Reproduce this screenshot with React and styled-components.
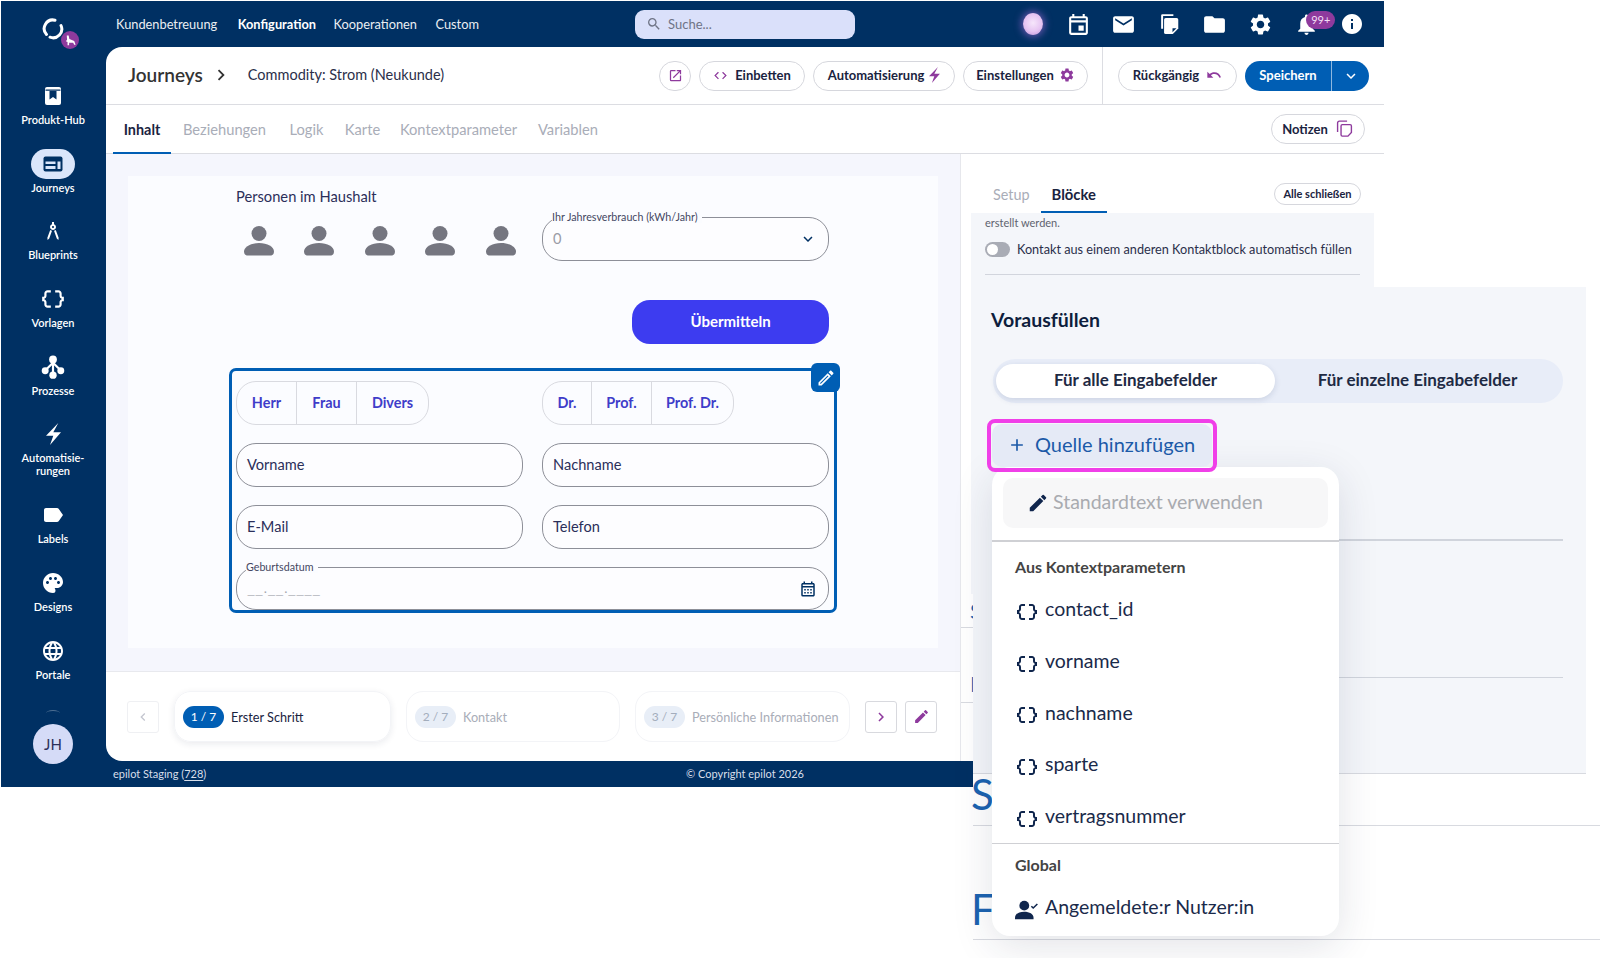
import React from 'react';
import styled, { createGlobalStyle } from 'styled-components';
import {
  MdArchitecture, MdDataObject, MdLabel, MdPalette, MdLanguage, MdOutlineEvent, MdEmail,
  MdFolder, MdSettings, MdNotifications, MdInfo, MdSearch, MdOutlineOpenInNew, MdCode,
  MdUndo, MdKeyboardArrowDown, MdKeyboardArrowRight, MdKeyboardArrowLeft, MdEdit,
  MdOutlineEdit, MdOutlineCalendarMonth, MdAdd,
} from 'react-icons/md';

const NAVY = '#003063';
const BLUE = '#005eb4';
const PURPLE = '#8e3a9d';
const INK = '#1a2340';
const FONT = `Lato, "Liberation Sans", sans-serif`;

const GlobalStyle = createGlobalStyle`
  html, body { margin: 0; padding: 0; background: #fff; }
  * { box-sizing: border-box; }
  body { font-family: ${FONT}; color: ${INK}; }
`;

const Page = styled.div`
  position: relative;
  width: 1600px;
  height: 958px;
  padding: 1px 0 0 1px;
  overflow: hidden;
  background: #fff;
`;

const AppWindow = styled.div`
  display: flex;
  width: 1383px;
  height: 786px;
  background: ${NAVY};
`;

/* sidebar */
const Sidebar = styled.aside`
  display: flex;
  flex-direction: column;
  align-items: center;
  flex: 0 0 105px;
  padding: 0 1px 23px 0;
`;

const LogoBox = styled.div`
  position: relative;
  width: 24px;
  height: 24px;
  margin: 16px 0 40px;
  color: #fff;
`;

const LogoBadge = styled.div`
  position: absolute;
  left: 20px;
  top: 14px;
  display: flex;
  align-items: center;
  justify-content: center;
  width: 18px;
  height: 18px;
  border-radius: 50%;
  background: ${PURPLE};
`;

const SideNav = styled.nav`
  display: flex;
  flex-direction: column;
  align-items: center;
  gap: 22.7px;
`;

const SideItem = styled.div`
  display: flex;
  flex-direction: column;
  align-items: center;
  gap: 2px;
  width: 100%;
  color: #fff;
  font-size: 11px;
  font-weight: 600;
  line-height: 13px;
  text-align: center;
`;

const SideIcon = styled.div`
  display: flex;
  align-items: center;
  justify-content: center;
  width: 44px;
  height: 30px;
  border-radius: 15px;
  background: ${(p) => (p.$active ? '#dbe6fb' : 'transparent')};
  color: ${(p) => (p.$active ? NAVY : '#fff')};
`;

const HiddenArc = styled.div`
  width: 14px;
  height: 6px;
  margin-top: auto;
  margin-bottom: 8px;
  border-top: 1px solid rgba(255, 255, 255, 0.3);
  border-radius: 50%;
`;

const Avatar = styled.div`
  display: flex;
  align-items: center;
  justify-content: center;
  width: 40px;
  height: 40px;
  border-radius: 50%;
  background: #d5dbf7;
  color: #2b2f5a;
  font-size: 15px;
`;

/* main column */
const MainColumn = styled.div`
  display: flex;
  flex-direction: column;
  flex: 1;
  min-width: 0;
`;

const TopBar = styled.header`
  display: flex;
  align-items: center;
  flex: 0 0 46px;
  padding: 0 9.5px 0 10px;
`;

const TopNav = styled.div`
  display: flex;
  align-items: center;
  gap: 18.5px;
  width: 519px;
`;

const TopLink = styled.a`
  margin: ${(p) => (p.$active ? '0 -1px 0 2px' : 0)};
  color: #fff;
  font-size: 12.8px;
  font-weight: ${(p) => (p.$active ? 700 : 400)};
  opacity: ${(p) => (p.$active ? 1 : 0.92)};
`;

const SearchBox = styled.div`
  display: flex;
  align-items: center;
  gap: 6px;
  width: 220px;
  height: 29px;
  padding-left: 11px;
  border-radius: 9px;
  background: #dae0fa;
  color: #6f7486;
  font-size: 13px;
`;

const TopIcons = styled.div`
  display: flex;
  align-items: center;
  margin-left: auto;
`;

const TopIcon = styled.div`
  position: relative;
  display: flex;
  align-items: center;
  justify-content: center;
  width: 45.6px;
  height: 46px;
  color: #fff;
`;

const Orb = styled.div`
  width: 20px;
  height: 22px;
  border-radius: 50%;
  background: radial-gradient(circle at 50% 45%, #f6e6fb 0%, #e6c4f2 55%, #b68ad6 100%);
  box-shadow: 0 0 7px 2px rgba(170, 110, 220, 0.55);
`;

const NotifyBadge = styled.span`
  position: absolute;
  left: 23px;
  top: 10px;
  width: 29px;
  height: 18px;
  border-radius: 9px;
  background: ${PURPLE};
  color: #f3dff6;
  font-size: 11px;
  line-height: 18px;
  text-align: center;
`;

const Card = styled.main`
  display: flex;
  flex-direction: column;
  flex: 1;
  min-height: 0;
  overflow: hidden;
  border-radius: 16px 0 0 16px;
  background: #fff;
`;

const HeaderRow = styled.div`
  display: flex;
  align-items: stretch;
  flex: 0 0 58px;
  padding-left: 22px;
  border-bottom: 1px solid #dcdde2;
`;

const Crumbs = styled.div`
  display: flex;
  align-items: center;
  padding-bottom: 2px;
`;

const CrumbTitle = styled.h1`
  margin: 0;
  color: #333;
  font-size: 19px;
  font-weight: 600;
`;

const CrumbChevron = styled.span`
  display: flex;
  margin: 0 16px 0 7px;
  color: #333;
`;

const CrumbText = styled.span`
  color: #2b2f4a;
  font-size: 14.5px;
`;

const ActionGroup = styled.div`
  display: flex;
  align-items: center;
  gap: 8px;
  margin-left: ${(p) => (p.$push ? 'auto' : 0)};
  padding: ${(p) => p.$pad};
  border-left: ${(p) => (p.$line ? '1px solid #dcdde2' : 'none')};
`;

const PillButton = styled.button`
  display: flex;
  align-items: center;
  justify-content: center;
  gap: ${(p) => p.$gap || 7}px;
  width: ${(p) => p.$w}px;
  height: 30px;
  padding: 0 0 1px;
  border: 1px solid #d6d7dd;
  border-radius: 15px;
  background: #fff;
  color: ${INK};
  font-family: ${FONT};
  font-size: 13px;
  font-weight: 700;
  svg { color: ${PURPLE}; flex: none; }
`;

const SaveSplit = styled.div`
  display: flex;
  height: 30px;
  overflow: hidden;
  border-radius: 15px;
  background: ${BLUE};
  color: #fff;
`;

const SaveLabel = styled.span`
  width: 87px;
  border-right: 1px solid #8fb8df;
  font-size: 13px;
  font-weight: 700;
  line-height: 29px;
  text-align: center;
`;

const SaveCaret = styled.span`
  display: flex;
  align-items: center;
  justify-content: center;
  width: 37px;
`;

const TabsRow = styled.div`
  display: flex;
  align-items: stretch;
  flex: 0 0 49px;
  padding: 0 19px 0 7px;
  border-bottom: 1px solid #dcdde2;
`;

const Tab = styled.a`
  display: flex;
  align-items: center;
  justify-content: center;
  width: ${(p) => p.$w}px;
  padding-top: 1px;
  border-bottom: 2px solid ${(p) => (p.$active ? BLUE : 'transparent')};
  margin-bottom: -1px;
  color: ${(p) => (p.$active ? INK : '#a9adb8')};
  font-size: ${(p) => (p.$active ? 14.4 : 14.7)}px;
  font-weight: ${(p) => (p.$active ? 700 : 400)};
`;

const NotesWrap = styled.div`
  display: flex;
  align-items: center;
  margin-left: auto;
`;

const Workspace = styled.div`
  display: flex;
  flex: 1;
  min-height: 0;
`;

const LeftColumn = styled.section`
  display: flex;
  flex-direction: column;
  flex: 0 0 854px;
`;

const Stage = styled.div`
  flex: 1;
  padding: 22px 22px 23px;
  background: #f5f6fd;
`;

const Canvas = styled.div`
  height: 100%;
  padding: 11px 109px 0 108px;
  background: #fbfcff;
`;

const FieldLabel = styled.div`
  color: #2b2f5a;
  font-size: 14.7px;
  line-height: 18px;
`;

const TwoCols = styled.div`
  display: grid;
  grid-template-columns: 287px 287px;
  column-gap: 19px;
  margin-top: ${(p) => p.$top || 0}px;
`;

const Persons = styled.div`
  display: flex;
  gap: 30.4px;
  padding: 9px 0 0 8px;
`;

const OutlineField = styled.div`
  position: relative;
  display: flex;
  align-items: center;
  justify-content: space-between;
  height: 44px;
  padding: 0 11px 2px 10px;
  border: 1.5px solid #8d8f98;
  border-radius: 20px;
  background: #fdfdff;
  color: ${(p) => (p.$muted ? '#9a9ca6' : '#2b2f5a')};
  font-size: 14.6px;
  svg { margin-top: 2px; }
`;

const Legend = styled.span`
  position: absolute;
  left: 9px;
  top: -8px;
  padding-right: 4px;
  background: #fbfcff;
  color: #44475f;
  font-size: 10.7px;
  line-height: 13px;
`;

const DatePlaceholder = styled.span`
  padding-bottom: 4px;
  color: #a4a6ae;
  font-size: 18px;
  font-weight: 300;
  line-height: 20px;
`;

const SubmitRow = styled.div`
  display: flex;
  justify-content: flex-end;
  margin-top: 39px;
`;

const SubmitButton = styled.button`
  width: 197px;
  height: 44px;
  padding: 0 0 2px;
  border: 0;
  border-radius: 18px;
  background: #3d3cf0;
  color: #fff;
  font-family: ${FONT};
  font-size: 15px;
  font-weight: 700;
`;

const BlockFrame = styled.div`
  position: relative;
  display: flex;
  flex-direction: column;
  gap: 18px;
  height: 245px;
  margin: 24px -8px 0 -7px;
  padding: 10px 5px 0 4px;
  border: 3px solid ${BLUE};
  border-radius: 7px;
`;

const FrameEdit = styled.div`
  position: absolute;
  right: -6px;
  top: -8px;
  display: flex;
  align-items: center;
  justify-content: center;
  width: 29px;
  height: 29px;
  border-radius: 6px;
  background: ${BLUE};
  color: #fff;
`;

const ChoiceGroup = styled.div`
  display: inline-flex;
  height: 44px;
  overflow: hidden;
  border: 1px solid #d9dae0;
  border-radius: 20px;
  justify-self: start;
`;

const Choice = styled.span`
  display: flex;
  align-items: center;
  justify-content: center;
  width: ${(p) => p.$w}px;
  padding-bottom: 2px;
  border-left: ${(p) => (p.$first ? 'none' : '1px solid #d9dae0')};
  color: #3f3cc9;
  font-size: 14.4px;
  font-weight: 700;
`;

const Stepper = styled.div`
  display: flex;
  align-items: center;
  gap: 15px;
  flex: 0 0 90px;
  padding-left: 21px;
  border-top: 1px solid #e8e9ee;
`;

const SquareButton = styled.button`
  display: flex;
  align-items: center;
  justify-content: center;
  width: 32px;
  height: 32px;
  margin-left: ${(p) => p.$shift || 0}px;
  padding: 0;
  border: 1px solid ${(p) => (p.$off ? '#eff0f3' : '#d8d9de')};
  border-radius: 3px;
  background: #fff;
  color: ${(p) => (p.$off ? '#c4c6cf' : PURPLE)};
`;

const StepCard = styled.div`
  display: flex;
  align-items: center;
  gap: 7px;
  width: ${(p) => p.$w}px;
  height: 51px;
  padding-left: 8px;
  border: 1px solid #f3f4f7;
  border-radius: 17px;
  box-shadow: ${(p) => (p.$active ? '0 2px 7px rgba(20, 30, 70, 0.09)' : 'none')};
  color: ${(p) => (p.$active ? INK : '#a9adb8')};
  font-size: 12.7px;
`;

const StepPill = styled.span`
  width: 41px;
  height: 22px;
  border-radius: 11px;
  background: ${(p) => (p.$active ? BLUE : '#e8eef7')};
  color: ${(p) => (p.$active ? '#fff' : '#a3adbc')};
  font-size: 12px;
  line-height: 22px;
  text-align: center;
`;

const RightColumn = styled.section`
  display: flex;
  flex-direction: column;
  flex: 1;
  border-left: 1px solid #e6e7ec;
`;

const SideTabs = styled.div`
  display: flex;
  align-items: flex-end;
  flex: 0 0 59px;
  padding: 0 23px 0 21px;
`;

const SideTab = styled.a`
  padding: 0 11px 8px;
  border-bottom: 2px solid ${(p) => (p.$active ? BLUE : 'transparent')};
  color: ${(p) => (p.$active ? INK : '#a9adb8')};
  font-size: ${(p) => (p.$active ? 14.8 : 14.4)}px;
  font-weight: ${(p) => (p.$active ? 700 : 400)};
`;

const CloseAll = styled.button`
  width: 87px;
  height: 22px;
  margin: 0 0 8px auto;
  padding: 0 0 1px;
  border: 1px solid #d6d7dd;
  border-radius: 11px;
  background: #fff;
  color: ${INK};
  font-family: ${FONT};
  font-size: 11px;
  font-weight: 700;
`;

const BlockPanel = styled.div`
  flex: 0 0 381px;
  margin: 0 10px;
  padding: 2px 14px 0;
  background: #f4f6fa;
`;

const SmallNote = styled.div`
  color: #5f636f;
  font-size: 11px;
  line-height: 16px;
`;

const ToggleRow = styled.div`
  display: flex;
  align-items: center;
  gap: 7px;
  margin-top: 10px;
  padding-bottom: 17px;
  border-bottom: 1px solid #d2d5dd;
  color: #2b2f4a;
  font-size: 12.7px;
  line-height: 16px;
  white-space: nowrap;
`;

const ToggleTrack = styled.span`
  display: flex;
  align-items: center;
  width: 25px;
  height: 15px;
  padding-left: 2px;
  border-radius: 8px;
  background: #a9acb5;
`;

const ToggleKnob = styled.span`
  width: 11px;
  height: 11px;
  border-radius: 50%;
  background: #fff;
`;

const ClippedRow = styled.div`
  display: flex;
  align-items: flex-end;
  height: ${(p) => p.$h}px;
  padding: 0 0 ${(p) => p.$bottom}px 9px;
  border-bottom: 1px solid #d8dae0;
  color: #1c63b0;
  font-size: 22px;
  line-height: 20px;
`;

const FooterBar = styled.footer`
  display: flex;
  align-items: center;
  flex: 0 0 26px;
  padding: 0 0 2px 7px;
  color: #d8dfea;
  font-size: 11px;
`;

const FooterLeft = styled.span`
  width: 573px;
  u { text-underline-offset: 2px; }
`;

/* zoomed panel lying over the window */
const ZoomOverlay = styled.div`
  position: absolute;
  left: 973px;
  top: 287px;
  width: 627px;
  height: 671px;
  background: #fff;
`;

const GreySection = styled.div`
  width: 613px;
  height: 487px;
  padding-top: 21px;
  border-bottom: 1.5px solid #d8dae0;
  background: #f4f6fa;
`;

const SectionTitle = styled.h2`
  margin: 0 0 0 18px;
  color: #0e1e3d;
  font-size: 19.5px;
  font-weight: 700;
  line-height: 24px;
`;

const Segmented = styled.div`
  display: flex;
  align-items: center;
  width: 570px;
  height: 44px;
  margin: 27px 0 0 20px;
  padding: 0 3px;
  border-radius: 22px;
  background: #e8edf8;
`;

const Segment = styled.span`
  flex: ${(p) => (p.$active ? '0 0 279px' : 1)};
  height: 34px;
  border-radius: 17px;
  background: ${(p) => (p.$active ? '#fff' : 'transparent')};
  box-shadow: ${(p) => (p.$active ? '0 2px 6px rgba(30, 50, 100, 0.14)' : 'none')};
  color: #1e2a44;
  font-size: 17px;
  font-weight: 700;
  line-height: 32px;
  text-align: center;
`;

const Highlight = styled.div`
  position: relative;
  z-index: 2;
  width: 230px;
  height: 53px;
  margin: 16px 0 0 14px;
  padding: 1px;
  border: 4px solid #f03fe8;
  border-radius: 8px;
`;

const AddButton = styled.div`
  display: flex;
  align-items: center;
  gap: 8px;
  height: 100%;
  padding: 0 0 4px 15px;
  border-radius: 10px;
  background: #e5eaf6;
  color: #1c5aa8;
  font-size: 20px;
  svg { margin-top: 3px; }
`;

const SectionRule = styled.div`
  width: 570px;
  height: 1.5px;
  margin: ${(p) => p.$top}px 0 0 20px;
  background: #d0d4dc;
`;

const LargeRow = styled.div`
  height: ${(p) => p.$h}px;
  padding-top: ${(p) => p.$top}px;
  border-bottom: 1.5px solid #d8dae0;
  color: #1c63b0;
  font-size: 42px;
  line-height: 40px;
  text-indent: -2px;
`;

const SourceMenu = styled.div`
  position: absolute;
  left: 19px;
  top: 180px;
  width: 347px;
  height: 469px;
  border-radius: 18px;
  background: #fff;
  box-shadow: 0 10px 40px rgba(30, 40, 70, 0.13);
`;

const DefaultOption = styled.div`
  display: flex;
  align-items: center;
  gap: 4px;
  height: 50px;
  margin: 11px 11px 12px;
  padding: 0 0 3px 24px;
  border-radius: 10px;
  background: #f7f7f8;
  color: #a9abb0;
  font-size: 19.5px;
  svg { color: #10264d; margin-top: 3px; }
`;

const MenuRule = styled.div`
  height: 1.5px;
  background: #cfd0d4;
`;

const MenuLabel = styled.div`
  height: ${(p) => p.$h}px;
  padding: ${(p) => p.$top}px 0 0 23px;
  color: #444;
  font-size: 16px;
  font-weight: 700;
  line-height: 22px;
`;

const MenuItem = styled.div`
  display: flex;
  align-items: center;
  gap: 6px;
  height: 51.7px;
  padding: 0 0 3px 23px;
  color: #1a2a4a;
  font-size: 19.5px;
  svg { color: #10264d; flex: none; margin-top: 6px; }
`;

const ProduktIcon = () => (
  <svg width="20" height="20" viewBox="0 0 20 20">
    <path fill="currentColor" d="M4 1h12a2 2 0 0 1 2 2v14a2 2 0 0 1-2 2H4a2 2 0 0 1-2-2V3a2 2 0 0 1 2-2z" />
    <path fill={NAVY} d="M2.500 3.500h15v1.200h-15zM6.500 5h7v8.500L10 11l-3.500 2.500z" />
  </svg>
);

const JourneyIcon = () => (
  <svg width="20" height="16" viewBox="0 0 20 16">
    <rect x="0.5" y="0.5" width="19" height="15" rx="2" fill="currentColor" />
    <path fill="#dbe6fb" d="M2.500 5.500h10v2.500h-10zM2.500 10h10v3h-10zM14.500 5.500h3v7.500h-3z" />
  </svg>
);

const ProcessIcon = () => (
  <svg width="26" height="26" viewBox="0 0 24 24" fill="currentColor">
    <path d="M12 6v14M12 8l-7 7M12 8l7 7" stroke="currentColor" strokeWidth="2" fill="none" />
    <circle cx="12" cy="5" r="3.600" />
    <circle cx="4.800" cy="15.500" r="3.200" />
    <circle cx="19.200" cy="15.500" r="3.200" />
    <circle cx="12" cy="19.500" r="3.400" />
  </svg>
);

const BoltIcon = ({ size = 22 }) => (
  <svg width={(size * 15) / 22} height={size} viewBox="0 0 15 22" fill="currentColor">
    <path d="M12.300 0 0 12.700h7.300L4 22 15 9.300H7.300z" />
  </svg>
);

const LogoMark = () => (
  <svg width="24" height="24" viewBox="0 0 24 24" fill="none" stroke="currentColor" strokeWidth="3" strokeLinecap="round">
    <path d="M14 3.200A8.700 8.700 0 0 0 5.500 17.500" />
    <path d="M20 8.500A8.700 8.700 0 0 1 9 20.200" />
  </svg>
);

const BadgeMark = () => (
  <svg width="13" height="13" viewBox="0 0 14 14" fill="#fff">
    <path d="M3 1.500h2l.8 4 5.200 2 1.500 4h-1.600l-1-2.200H5.500V12H3.800V8.500L2 7.800l1.300-1.600z" />
  </svg>
);

const NotesIcon = ({ size = 22, outline }) => (
  <svg width={size} height={size} viewBox="0 0 22 22" fill={outline ? 'none' : 'currentColor'} stroke={outline ? 'currentColor' : 'none'} strokeWidth="1.600">
    {outline ? (
      <>
        <path d="M14 2.500H5a2 2 0 0 0-2 2V15" />
        <path d="M8.500 6.500h9a1.500 1.500 0 0 1 1.500 1.500v7.500L15 19.800H8.500A1.500 1.500 0 0 1 7 18.300V8a1.500 1.500 0 0 1 1.500-1.500z" />
      </>
    ) : (
      <>
        <path d="M5 2h10v1.600H5.600v11.800H3.800V3.200A1.200 1.200 0 0 1 5 2z" />
        <path d="M8 5.500h10a1.500 1.500 0 0 1 1.500 1.500v8.200l-5 5H8A1.500 1.500 0 0 1 6.500 18.700V7A1.500 1.500 0 0 1 8 5.500z" />
        <path fill={NAVY} d="M14.200 15h3.600l-3.600 3.600z" />
      </>
    )}
  </svg>
);

const PersonIcon = () => (
  <svg width="30" height="30" viewBox="0 0 30 30" fill="#757680">
    <circle cx="15" cy="7.500" r="7.500" />
    <path d="M0 25.500C0 21 6.500 17 15 17s15 4 15 8.500c0 2.500-1.500 4-3.500 4h-23C1.500 29.500 0 28 0 25.500z" />
  </svg>
);

const UserCheckIcon = () => (
  <svg width="24" height="24" viewBox="0 0 22 22" fill="currentColor">
    <circle cx="8.500" cy="7" r="4.500" />
    <path d="M0 18c0-3.500 3.800-5.500 8.500-5.500S17 14.500 17 18v1.500H0z" />
    <path d="M15 7.500l1.700 1.700L20.500 5.500" fill="none" stroke="currentColor" strokeWidth="1.400" />
  </svg>
);

const sideItems = [
  { label: 'Produkt-Hub', icon: <ProduktIcon /> },
  { label: 'Journeys', icon: <JourneyIcon />, active: true },
  { label: 'Blueprints', icon: <MdArchitecture size={24} /> },
  { label: 'Vorlagen', icon: <MdDataObject size={26} /> },
  { label: 'Prozesse', icon: <ProcessIcon /> },
  { label: <>Automatisie-<br />rungen</>, icon: <BoltIcon /> },
  { label: 'Labels', icon: <MdLabel size={24} /> },
  { label: 'Designs', icon: <MdPalette size={24} /> },
  { label: 'Portale', icon: <MdLanguage size={24} /> },
];

const tabs = [
  { label: 'Beziehungen', w: 107 },
  { label: 'Logik', w: 57 },
  { label: 'Karte', w: 55 },
  { label: 'Kontextparameter', w: 137 },
  { label: 'Variablen', w: 82 },
];
const params = ['contact_id', 'vorname', 'nachname', 'sparte', 'vertragsnummer'];

const App = () => (
  <Page>
    <GlobalStyle />
    <AppWindow>
      <Sidebar>
        <LogoBox>
          <LogoMark />
          <LogoBadge><BadgeMark /></LogoBadge>
        </LogoBox>
        <SideNav>
          {sideItems.map((item, i) => (
            <SideItem key={i}>
              <SideIcon $active={item.active}>{item.icon}</SideIcon>
              <span>{item.label}</span>
            </SideItem>
          ))}
        </SideNav>
        <HiddenArc />
        <Avatar>JH</Avatar>
      </Sidebar>
      <MainColumn>
        <TopBar>
          <TopNav>
            <TopLink>Kundenbetreuung</TopLink>
            <TopLink $active>Konfiguration</TopLink>
            <TopLink>Kooperationen</TopLink>
            <TopLink>Custom</TopLink>
          </TopNav>
          <SearchBox><MdSearch size={16} />Suche...</SearchBox>
          <TopIcons>
            <TopIcon><Orb /></TopIcon>
            <TopIcon><MdOutlineEvent size={25} /></TopIcon>
            <TopIcon><MdEmail size={25} /></TopIcon>
            <TopIcon><NotesIcon size={24} /></TopIcon>
            <TopIcon><MdFolder size={25} /></TopIcon>
            <TopIcon><MdSettings size={25} /></TopIcon>
            <TopIcon><MdNotifications size={25} /><NotifyBadge>99+</NotifyBadge></TopIcon>
            <TopIcon><MdInfo size={24} /></TopIcon>
          </TopIcons>
        </TopBar>
        <Card>
          <HeaderRow>
            <Crumbs>
              <CrumbTitle>Journeys</CrumbTitle>
              <CrumbChevron><MdKeyboardArrowRight size={22} /></CrumbChevron>
              <CrumbText>Commodity: Strom (Neukunde)</CrumbText>
            </Crumbs>
            <ActionGroup $push $pad="0 14px 0 0">
              <PillButton $w={32}><MdOutlineOpenInNew size={15} /></PillButton>
              <PillButton $w={106}><MdCode size={15} />Einbetten</PillButton>
              <PillButton $w={142} $gap={5}>Automatisierung<BoltIcon size={16} /></PillButton>
              <PillButton $w={125} $gap={5}>Einstellungen<MdSettings size={16} /></PillButton>
            </ActionGroup>
            <ActionGroup $line $pad="0 15px 0 15px">
              <PillButton $w={119}>Rückgängig<MdUndo size={16} /></PillButton>
              <SaveSplit>
                <SaveLabel>Speichern</SaveLabel>
                <SaveCaret><MdKeyboardArrowDown size={18} /></SaveCaret>
              </SaveSplit>
            </ActionGroup>
          </HeaderRow>
          <TabsRow>
            <Tab $active $w={58}>Inhalt</Tab>
            {tabs.map((t) => <Tab key={t.label} $w={t.w}>{t.label}</Tab>)}
            <NotesWrap>
              <PillButton $w={94}>Notizen<NotesIcon size={19} outline /></PillButton>
            </NotesWrap>
          </TabsRow>
          <Workspace>
            <LeftColumn>
              <Stage>
                <Canvas>
                  <FieldLabel>Personen im Haushalt</FieldLabel>
                  <TwoCols $top={12}>
                    <Persons>
                      {[0, 1, 2, 3, 4].map((i) => <PersonIcon key={i} />)}
                    </Persons>
                    <OutlineField $muted>
                      <Legend>Ihr Jahresverbrauch (kWh/Jahr)</Legend>
                      0
                      <MdKeyboardArrowDown size={18} color={NAVY} />
                    </OutlineField>
                  </TwoCols>
                  <SubmitRow><SubmitButton>Übermitteln</SubmitButton></SubmitRow>
                  <BlockFrame>
                    <FrameEdit><MdOutlineEdit size={20} /></FrameEdit>
                    <TwoCols>
                      <ChoiceGroup>
                        <Choice $first $w={59}>Herr</Choice>
                        <Choice $w={60}>Frau</Choice>
                        <Choice $w={72}>Divers</Choice>
                      </ChoiceGroup>
                      <ChoiceGroup>
                        <Choice $first $w={48}>Dr.</Choice>
                        <Choice $w={60}>Prof.</Choice>
                        <Choice $w={82}>Prof. Dr.</Choice>
                      </ChoiceGroup>
                    </TwoCols>
                    <TwoCols>
                      <OutlineField>Vorname</OutlineField>
                      <OutlineField>Nachname</OutlineField>
                    </TwoCols>
                    <TwoCols>
                      <OutlineField>E-Mail</OutlineField>
                      <OutlineField>Telefon</OutlineField>
                    </TwoCols>
                    <OutlineField>
                      <Legend>Geburtsdatum</Legend>
                      <DatePlaceholder>__.__.____</DatePlaceholder>
                      <MdOutlineCalendarMonth size={18} color={NAVY} />
                    </OutlineField>
                  </BlockFrame>
                </Canvas>
              </Stage>
              <Stepper>
                <SquareButton $off><MdKeyboardArrowLeft size={16} /></SquareButton>
                <StepCard $active $w={217}><StepPill $active>1 / 7</StepPill>Erster Schritt</StepCard>
                <StepCard $w={214}><StepPill>2 / 7</StepPill>Kontakt</StepCard>
                <StepCard $w={215}><StepPill>3 / 7</StepPill>Persönliche Informationen</StepCard>
                <SquareButton><MdKeyboardArrowRight size={18} /></SquareButton>
                <SquareButton $shift={-7}><MdEdit size={17} /></SquareButton>
              </Stepper>
            </LeftColumn>
            <RightColumn>
              <SideTabs>
                <SideTab>Setup</SideTab>
                <SideTab $active>Blöcke</SideTab>
                <CloseAll>Alle schließen</CloseAll>
              </SideTabs>
              <BlockPanel>
                <SmallNote>erstellt werden.</SmallNote>
                <ToggleRow>
                  <ToggleTrack><ToggleKnob /></ToggleTrack>
                  Kontakt aus einem anderen Kontaktblock automatisch füllen
                </ToggleRow>
              </BlockPanel>
              <ClippedRow $h={34} $bottom={6}>S</ClippedRow>
              <ClippedRow $h={75} $bottom={8}>I</ClippedRow>
            </RightColumn>
          </Workspace>
        </Card>
        <FooterBar>
          <FooterLeft>epilot Staging (<u>728</u>)</FooterLeft>
          <span>© Copyright epilot 2026</span>
        </FooterBar>
      </MainColumn>
    </AppWindow>

    <ZoomOverlay>
      <GreySection>
        <SectionTitle>Vorausfüllen</SectionTitle>
        <Segmented>
          <Segment $active>Für alle Eingabefelder</Segment>
          <Segment>Für einzelne Eingabefelder</Segment>
        </Segmented>
        <Highlight>
          <AddButton><MdAdd size={20} />Quelle hinzufügen</AddButton>
        </Highlight>
        <SectionRule $top={67} />
        <SectionRule $top={136} />
      </GreySection>
      <LargeRow $h={52} $top={0}>Se</LargeRow>
      <LargeRow $h={114} $top={63}>Fu</LargeRow>
      <SourceMenu>
        <DefaultOption><MdEdit size={22} />Standardtext verwenden</DefaultOption>
        <MenuRule />
        <MenuLabel $h={43} $top={14}>Aus Kontextparametern</MenuLabel>
        {params.map((p) => (
          <MenuItem key={p}><MdDataObject size={24} />{p}</MenuItem>
        ))}
        <MenuRule />
        <MenuLabel $h={38} $top={10}>Global</MenuLabel>
        <MenuItem><UserCheckIcon />Angemeldete:r Nutzer:in</MenuItem>
      </SourceMenu>
    </ZoomOverlay>
  </Page>
);

export default App;
